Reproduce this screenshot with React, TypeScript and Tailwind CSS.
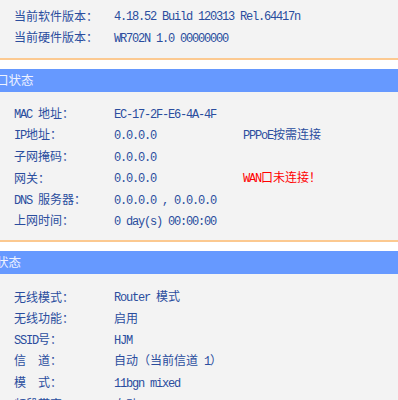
import React from "react";

const CJK = /([\u3000-\u303f\u4e00-\u9fff\uff00-\uffef]+)/;

// SimSun-like mix: CJK at 12px, Latin as narrow mono (6px per char)
function T({ s }: { s: string }) {
  const parts = s.split(CJK).filter((p) => p.length > 0);
  return (
    <>
      {parts.map((p, i) =>
        CJK.test(p) ? (
          <span key={i} className="font-['Noto_Sans_CJK_SC',sans-serif] text-[12px]">
            {p}
          </span>
        ) : (
          <span
            key={i}
            className="font-['Liberation_Mono',monospace] text-[12px] tracking-[-1.2px] whitespace-pre"
          >
            {p}
          </span>
        )
      )}
    </>
  );
}

type Row = { label: string; value: string; extra?: string; red?: boolean };

function InfoRow({ label, value, extra, red }: Row) {
  return (
    <div className="grid grid-cols-[100px_129px_1fr] items-center h-[21.4px] pl-[14px] text-[#2a4d9e] leading-none">
      <div className="whitespace-pre">
        <T s={label} />
      </div>
      <div className="whitespace-pre">
        <T s={value} />
      </div>
      <div className={red ? "text-[#ff0000] whitespace-pre" : "whitespace-pre"}>
        {extra && <T s={extra} />}
      </div>
    </div>
  );
}

function Divider() {
  return <div className="border-t-2 border-[#fcc990] bg-white h-[11px]" />;
}

function Header({ title }: { title: string }) {
  return (
    <div className="bg-[#6699ff] h-[23px] flex items-center overflow-hidden">
      <span className="ml-[-4px] text-[12.5px] text-[#eef2ff] font-['Noto_Sans_CJK_SC',sans-serif] whitespace-nowrap">
        {title}
      </span>
    </div>
  );
}

const version: Row[] = [
  { label: "当前软件版本：", value: "4.18.52 Build 120313 Rel.64417n" },
  { label: "当前硬件版本：", value: "WR702N 1.0 00000000" },
];

const wan: Row[] = [
  { label: "MAC 地址：", value: "EC-17-2F-E6-4A-4F" },
  { label: "IP地址：", value: "0.0.0.0", extra: "PPPoE按需连接" },
  { label: "子网掩码：", value: "0.0.0.0" },
  { label: "网关：", value: "0.0.0.0", extra: "WAN口未连接！", red: true },
  { label: "DNS 服务器：", value: "0.0.0.0 , 0.0.0.0" },
  { label: "上网时间：", value: "0 day(s) 00:00:00" },
];

const wireless: Row[] = [
  { label: "无线模式：", value: "Router 模式" },
  { label: "无线功能：", value: "启用" },
  { label: "SSID号：", value: "HJM" },
  { label: "信  道：", value: "自动（当前信道 1）" },
  { label: "模  式：", value: "11bgn mixed" },
  { label: "频段带宽：", value: "自动" },
];

export default function App() {
  return (
    <div className="w-[398px] h-[400px] overflow-hidden bg-[#f3f3f3]">
      <div className="pt-[4px] pb-[11px]">
        {version.map((r) => (
          <InfoRow key={r.label} {...r} />
        ))}
      </div>
      <Divider />
      <Header title="口状态" />
      <div className="pt-[10px] pb-[10px]">
        {wan.map((r) => (
          <InfoRow key={r.label} {...r} />
        ))}
      </div>
      <Divider />
      <Header title="状态" />
      <div className="pt-[11px]">
        {wireless.map((r) => (
          <InfoRow key={r.label} {...r} />
        ))}
      </div>
    </div>
  );
}
